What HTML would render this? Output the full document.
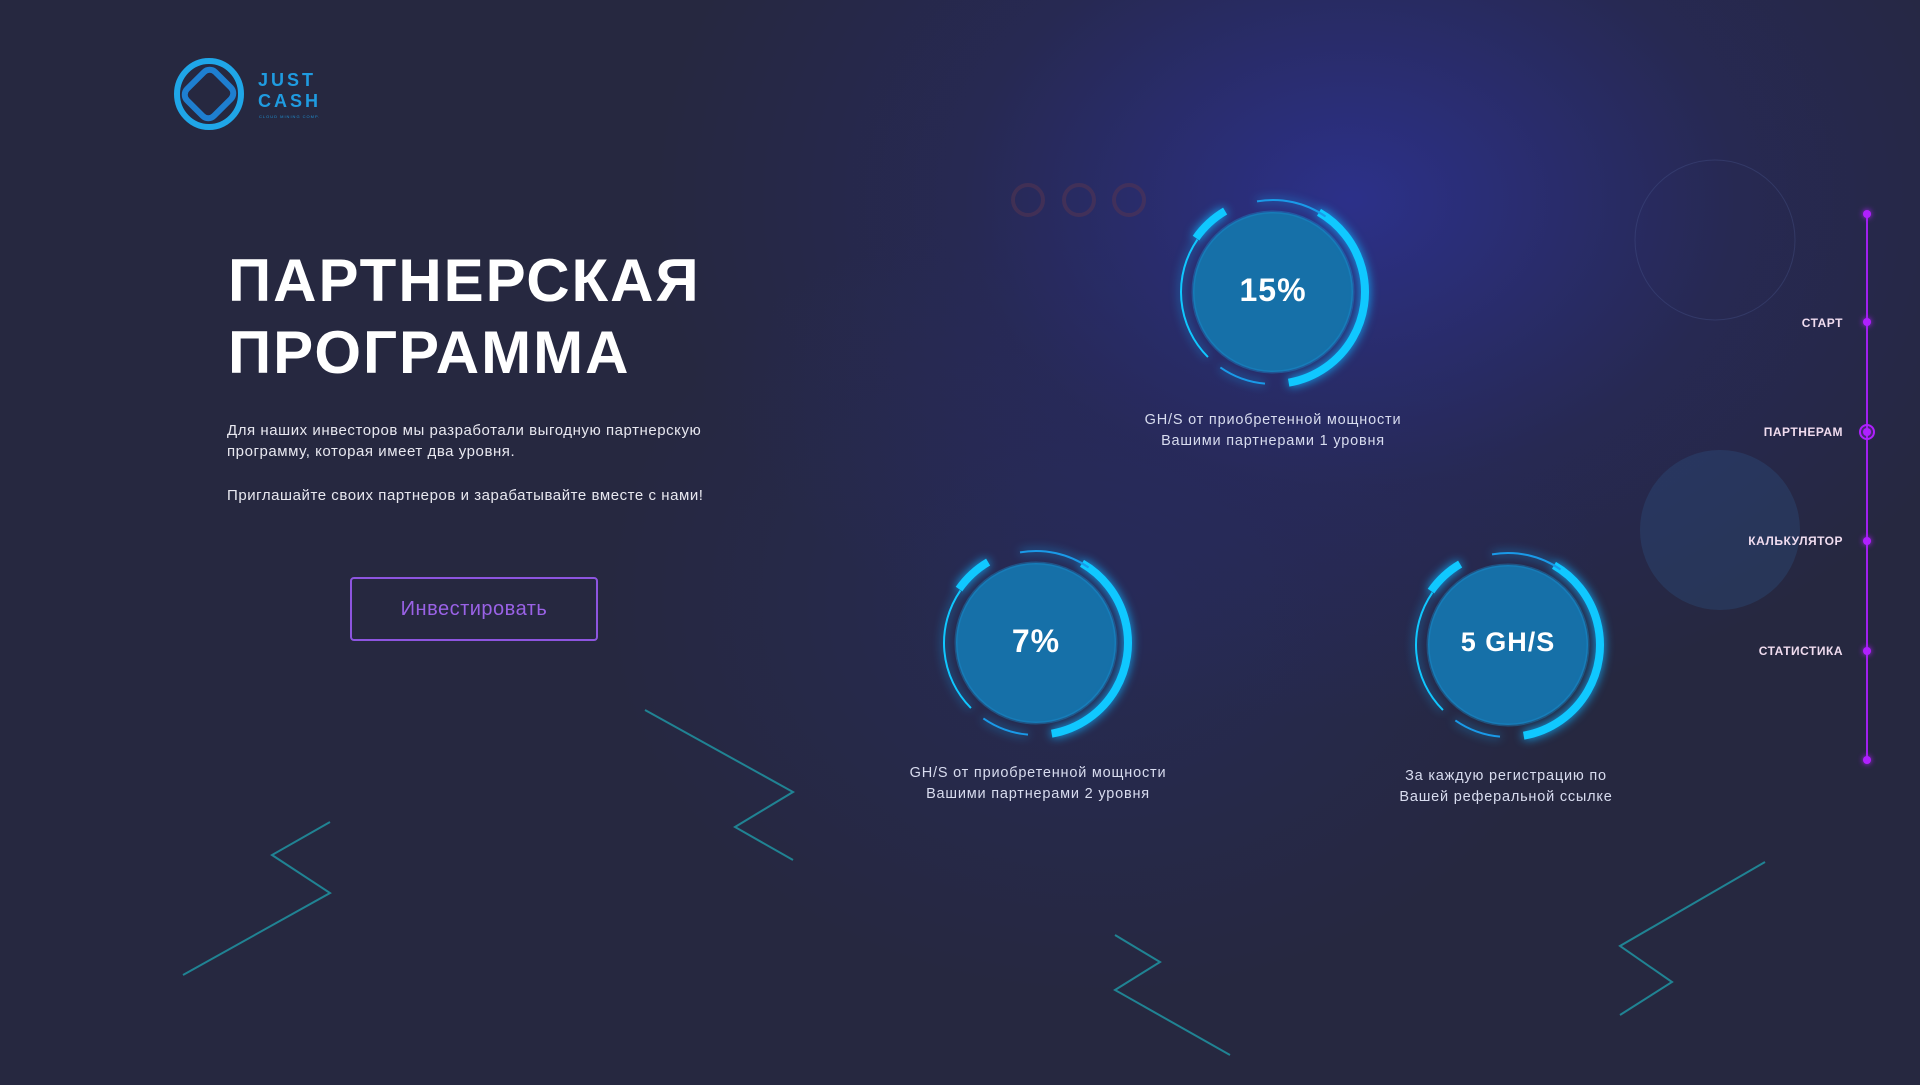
<!DOCTYPE html>
<html><head><meta charset="utf-8"><style>
*{margin:0;padding:0;box-sizing:border-box}
body{width:1920px;height:1085px;overflow:hidden;background:#262840;font-family:"Liberation Sans",sans-serif;position:relative;color:#fff}
.bg{position:absolute;inset:0;background:
radial-gradient(ellipse 700px 520px at 1350px 200px,rgba(45,50,150,.85),rgba(40,42,110,.4) 55%,rgba(38,40,64,0) 100%),
radial-gradient(ellipse 500px 400px at 1100px 600px,rgba(40,45,110,.45),rgba(38,40,64,0) 100%)}
.abs{position:absolute}
h1{position:absolute;left:228px;top:245px;font-size:60px;line-height:72px;font-weight:bold;letter-spacing:2px}
.p{position:absolute;left:227px;font-size:15px;line-height:21px;color:#e8e8f0;letter-spacing:.55px}
.btn{position:absolute;left:350px;top:577px;width:248px;height:64px;border:2px solid #8d55e0;border-radius:4px;color:#9a62e6;font-size:20px;text-align:center;line-height:60px;letter-spacing:.5px}
.cap{position:absolute;width:360px;text-align:center;font-size:14.5px;line-height:21px;color:#d8dcef;letter-spacing:.8px}
.circ{position:absolute;width:220px;height:220px}
.num{position:absolute;width:220px;text-align:center;font-weight:bold;font-size:32px;letter-spacing:1px;color:#fff}
.nav{position:absolute;right:77px;font-size:12px;font-weight:bold;color:#f0dcef;letter-spacing:.5px;text-align:right}
.dot{position:absolute;left:1863px;width:8px;height:8px;border-radius:50%;background:#b020ff;box-shadow:0 0 6px #b020ff}
</style></head><body>
<div class="bg"></div>
<svg class="abs" style="left:0;top:0" width="1920" height="1085">
<g stroke="#1f9aa8" stroke-width="2" fill="none" opacity=".8">
<polyline points="645,710 793,792 735,827 793,860"/>
<polyline points="330,822 272,855 330,893 183,975"/>
<polyline points="1115,935 1160,962 1115,990 1230,1055"/>
<polyline points="1765,862 1620,946 1672,982 1620,1015"/>
</g>
<circle cx="1720" cy="530" r="80" fill="#2f5a8a" opacity=".3"/>
<circle cx="1715" cy="240" r="80" fill="none" stroke="#4a5a90" stroke-width="1" opacity=".35"/>
<g fill="none" stroke="#5a3550" stroke-width="4" opacity=".5">
<circle cx="1028" cy="200" r="15"/><circle cx="1079" cy="200" r="15"/><circle cx="1129" cy="200" r="15"/>
</g>
<line x1="1867" y1="214" x2="1867" y2="760" stroke="#a020f0" stroke-width="2"/>
<circle cx="1867" cy="432" r="7" fill="none" stroke="#b020ff" stroke-width="2"/>
</svg>

<svg class="abs" style="left:172px;top:56px" width="80" height="76" viewBox="0 0 80 76">
<g fill="none" stroke-width="6">
<ellipse cx="37" cy="38" rx="32" ry="33" stroke="#1fa6e8"/>
<rect x="18" y="18" width="38" height="40" rx="8" transform="rotate(45 37 38)" stroke="#1e7fd0"/>
</g></svg>
<div class="abs" style="left:258px;top:70px;color:#1f9be0;font-weight:bold;font-size:18px;line-height:21px;letter-spacing:3px">JUST<br>CASH</div>
<div class="abs" style="left:259px;top:114px;color:#1f8fd0;font-size:4px;letter-spacing:1px">CLOUD MINING COMP.</div>

<h1>ПАРТНЕРСКАЯ<br>ПРОГРАММА</h1>
<div class="p" style="top:420px">Для наших инвесторов мы разработали выгодную партнерскую<br>программу, которая имеет два уровня.</div>
<div class="p" style="top:485px">Приглашайте своих партнеров и зарабатывайте вместе с нами!</div>
<div class="btn">Инвестировать</div>

<svg width="0" height="0" style="position:absolute"><defs>
<g id="ring">
<circle cx="110" cy="110" r="80" fill="#1670a8"/>
<circle cx="110" cy="110" r="80" fill="none" stroke="#1a8fd0" stroke-width="3" opacity=".4"/>
<g fill="none" stroke="#10c8ff" style="filter:drop-shadow(0 0 5px #10b0ff)">
<circle cx="110" cy="110" r="92" stroke-width="8" stroke-dasharray="225 9999" transform="rotate(-60 110 110)"/>
<circle cx="110" cy="110" r="92" stroke-width="2" stroke-dasharray="48 9999" transform="rotate(95 110 110)" stroke="#1a9ae8"/>
<circle cx="110" cy="110" r="92" stroke-width="2" stroke-dasharray="128 9999" transform="rotate(135 110 110)"/>
<circle cx="110" cy="110" r="94" stroke-width="8" stroke-dasharray="40 9999" transform="rotate(215 110 110)"/>
<circle cx="110" cy="110" r="92" stroke-width="2" stroke-dasharray="72 9999" transform="rotate(260 110 110)" stroke="#1a9ae8"/>
</g></g></defs></svg>
<svg class="circ" style="left:1163px;top:182px"><use href="#ring"/></svg>
<div class="num" style="left:1163px;top:272px">15%</div>
<div class="cap" style="left:1093px;top:410px">GH/S от приобретенной мощности<br>Вашими партнерами 1 уровня</div>

<svg class="circ" style="left:926px;top:533px"><use href="#ring"/></svg>
<div class="num" style="left:926px;top:623px">7%</div>
<div class="cap" style="left:858px;top:763px">GH/S от приобретенной мощности<br>Вашими партнерами 2 уровня</div>

<svg class="circ" style="left:1398px;top:535px"><use href="#ring"/></svg>
<div class="num" style="left:1398px;top:627px;font-size:27px">5 GH/S</div>
<div class="cap" style="left:1326px;top:766px">За каждую регистрацию по<br>Вашей реферальной ссылке</div>

<div class="nav" style="top:316px">СТАРТ</div>
<div class="nav" style="top:425px">ПАРТНЕРАМ</div>
<div class="nav" style="top:534px">КАЛЬКУЛЯТОР</div>
<div class="nav" style="top:644px">СТАТИСТИКА</div>
<div class="dot" style="top:210px"></div>
<div class="dot" style="top:318px"></div>
<div class="dot" style="top:428px"></div>
<div class="dot" style="top:537px"></div>
<div class="dot" style="top:647px"></div>
<div class="dot" style="top:756px"></div>
</body></html>
